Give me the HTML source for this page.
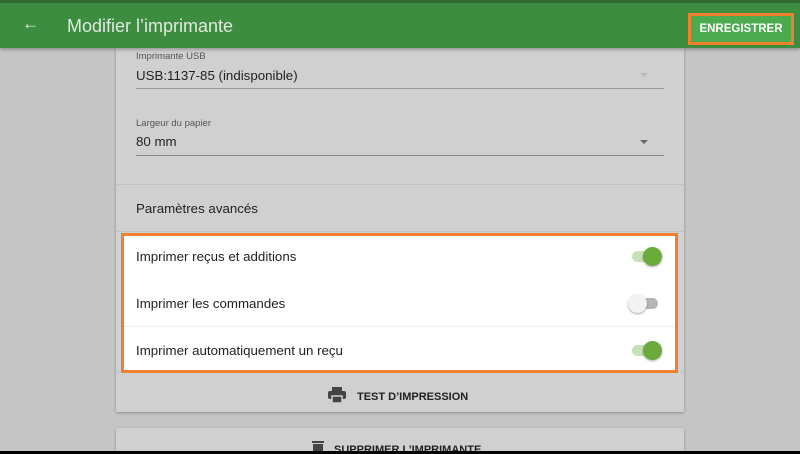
<!DOCTYPE html>
<html><head><meta charset="utf-8"><style>
*{margin:0;padding:0;box-sizing:border-box}
html,body{width:800px;height:454px;overflow:hidden}
body{background:#c6c6c6;font-family:"Liberation Sans",sans-serif;position:relative;color:#222}
.hdr{position:absolute;left:0;top:0;width:800px;height:48px;background:#3d8d40;border-top:3px solid #2e6a31;box-shadow:0 2px 3px rgba(0,0,0,.25);z-index:5}
.hdr .arrow{position:absolute;left:22px;top:11px;color:#e6efe6;font-size:17px}
.hdr .title{position:absolute;left:67px;top:13px;color:#e0e8e0;font-size:18px}
.save{position:absolute;left:688px;top:10px;width:106px;height:32px;border:3px solid #f0802e;background:#4cab4f;color:#fff;font-size:11.5px;font-weight:bold;text-align:center;line-height:26px}
.card{position:absolute;left:116px;top:48px;width:568px;height:364px;background:#d0d0d0;box-shadow:0 1px 3px rgba(0,0,0,.3)}
.lbl{position:absolute;left:20px;font-size:9.5px;color:#555}
.val{position:absolute;left:20px;font-size:13.3px;color:#222}
.line{position:absolute;left:20px;width:528px;height:1px;background:#888}
.tri{position:absolute;left:524px;width:0;height:0;border-left:4px solid transparent;border-right:4px solid transparent}
.sep{position:absolute;left:0;width:568px;height:1px;background:#c2c2c2}
.hl{position:absolute;left:121px;top:233px;width:557px;height:140px;border:3px solid #f0802e;background:#fff;z-index:3}
.row{position:absolute;left:12px;font-size:13.3px;color:#222}
.tg{position:absolute;left:508px;width:26px;height:11px;border-radius:6px}
.tg i{position:absolute;top:-4px;width:19px;height:19px;border-radius:50%;box-shadow:0 1px 2px rgba(0,0,0,.35)}
.btn{position:absolute;font-size:11px;font-weight:bold;color:#222}
.card2{position:absolute;left:116px;top:428px;width:568px;height:26px;background:#d0d0d0;box-shadow:0 1px 3px rgba(0,0,0,.3)}
.black{position:absolute;left:0;top:451px;width:800px;height:3px;background:#000;z-index:9}
</style></head><body>
<div class="hdr"><span class="arrow">←</span><span class="title">Modifier l’imprimante</span><div class="save">ENREGISTRER</div></div>
<div class="card">
 <div class="lbl" style="top:3px">Imprimante USB</div>
 <div class="val" style="top:20px">USB:1137-85 (indisponible)</div>
 <div class="tri" style="top:25px;border-top:4px solid #b8b8b8"></div>
 <div class="line" style="top:40px;background:#999"></div>
 <div class="lbl" style="top:70px">Largeur du papier</div>
 <div class="val" style="top:86px">80 mm</div>
 <div class="tri" style="top:92px;border-top:4px solid #666"></div>
 <div class="line" style="top:107px"></div>
 <div class="sep" style="top:136px"></div>
 <div class="val" style="top:153px">Paramètres avancés</div>
 <div class="sep" style="top:183px"></div>
 <div class="sep" style="top:323px"></div>
 <div class="btn" style="left:212px;top:339px"><svg width="18" height="16" viewBox="0 0 18 16" style="vertical-align:-3px;margin-right:11px"><rect x="4" y="0" width="10" height="4" fill="#444"/><rect x="0" y="4" width="18" height="8" rx="2" fill="#444"/><rect x="4" y="9" width="10" height="7" fill="#444" stroke="#d0d0d0" stroke-width="1.5"/></svg>TEST D’IMPRESSION</div>
</div>
<div class="hl">
 <div class="row" style="top:13px">Imprimer reçus et additions</div>
 <div class="tg" style="top:15px;background:#c6e2b6"><i style="left:11px;background:#6aab3c"></i></div>
 <div class="row" style="top:60px">Imprimer les commandes</div>
 <div class="tg" style="top:62px;background:#b5b5b5"><i style="left:-4px;background:#f2f2f2"></i></div>
 <div style="position:absolute;left:0;top:90px;width:551px;height:1px;background:#eee"></div>
 <div class="row" style="top:107px">Imprimer automatiquement un reçu</div>
 <div class="tg" style="top:109px;background:#c6e2b6"><i style="left:11px;background:#6aab3c"></i></div>
</div>
<div class="card2"><div class="btn" style="left:196px;top:12px"><svg width="12" height="16" viewBox="0 0 12 16" style="vertical-align:-3px;margin-right:10px"><rect x="0" y="1" width="12" height="2" fill="#444"/><rect x="1" y="4" width="10" height="12" fill="#444"/></svg>SUPPRIMER L’IMPRIMANTE</div></div>
<div class="black"></div>
</body></html>
